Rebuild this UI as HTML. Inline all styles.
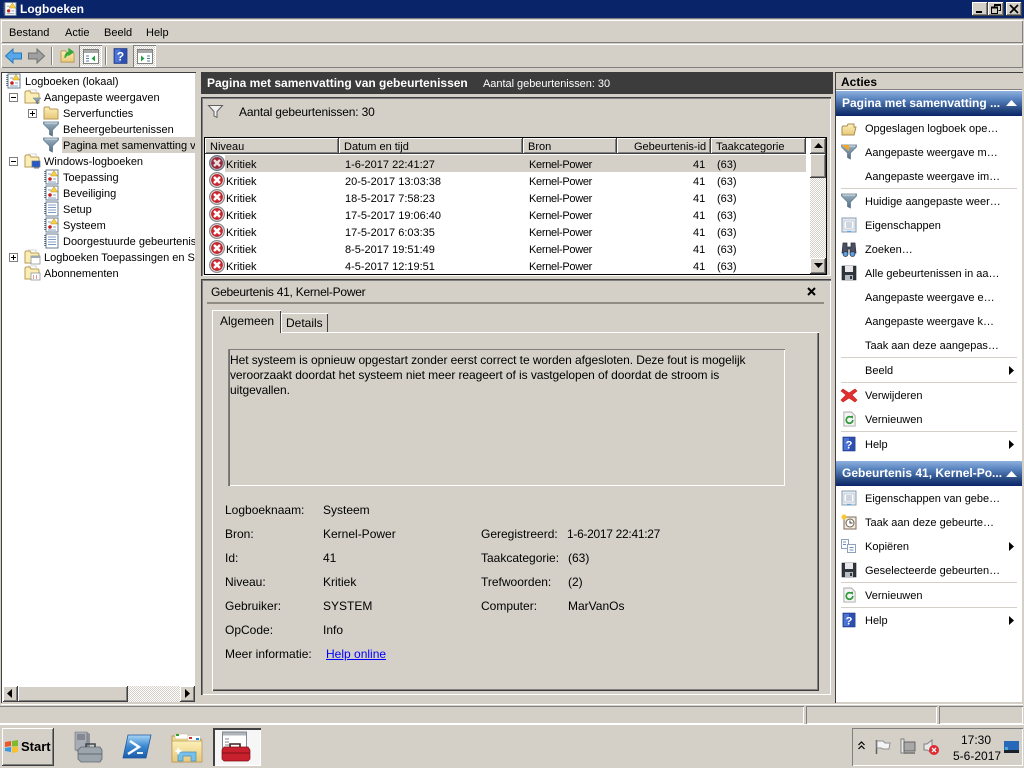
<!DOCTYPE html>
<html><head><meta charset="utf-8"><title>Logboeken</title>
<style>
html,body{margin:0;padding:0}
body{width:1024px;height:768px;position:relative;overflow:hidden;background:#d4d0c8;font:11px/16px "Liberation Sans",sans-serif;color:#000}
.a{position:absolute}
.t{position:absolute;white-space:nowrap;font:11px/16px "Liberation Sans",sans-serif;color:#000;margin-top:1px}
.d{font-size:12px;margin-top:0}
.k{letter-spacing:-.3px}
.btn{position:absolute;background:#d4d0c8;box-shadow:inset -1px -1px 0 #404040,inset 1px 1px 0 #fff,inset -2px -2px 0 #808080}
.hd{position:absolute;background:#d4d0c8;top:138px;height:16px;box-shadow:inset -1px -1px 0 #404040,inset 1px 1px 0 #fff,inset -2px -2px 0 #808080}
.dith{position:absolute;background:repeating-conic-gradient(#d4d0c8 0 25%,#fff 0 50%) 0 0/2px 2px}
.sep{position:absolute;left:841px;width:176px;height:1px;background:#d4d0c8}
.grp{position:absolute;left:836px;width:186px;height:25px;background:linear-gradient(#8eb1de,#5580bc 35%,#24467f 75%,#0a246a);color:#fff;font:bold 12px/25px "Liberation Sans",sans-serif;white-space:nowrap;text-indent:6px}
svg{position:absolute;overflow:visible}
a{color:#00f}
</style></head><body>
<svg width="0" height="0" style="position:absolute"><defs>
<linearGradient id="fg" x1="0" y1="0" x2="0" y2="1"><stop offset="0" stop-color="#9fb4c4"/><stop offset="1" stop-color="#4d6a80"/></linearGradient>
<linearGradient id="fo" x1="0" y1="0" x2="0" y2="1"><stop offset="0" stop-color="#fdf0b8"/><stop offset="1" stop-color="#e8c878"/></linearGradient>
<radialGradient id="rd"><stop offset="0" stop-color="#f05050"/><stop offset="1" stop-color="#b81420"/></radialGradient>
<symbol id="err" viewBox="0 0 16 16"><circle cx="8" cy="8" r="8" fill="#8b8b90"/><circle cx="8" cy="8" r="6.300" fill="url(#rd)" stroke="#e4e4e4" stroke-width=".9"/><path d="M5 5l6 6M11 5l-6 6" stroke="#fff" stroke-width="2.400"/></symbol>
<symbol id="errs" viewBox="0 0 16 16"><circle cx="8" cy="8" r="8" fill="#6c7488"/><circle cx="8" cy="8" r="6.300" fill="#9a2838" stroke="#bbb" stroke-width=".9"/><path d="M5 5l6 6M11 5l-6 6" stroke="#e8e0e0" stroke-width="2.400"/></symbol>
<symbol id="fil" viewBox="0 0 16 16"><path d="M.5 1h15v2L9.500 9v6l-3-1.500V9L.5 3z" fill="url(#fg)" stroke="#5e7587" stroke-width=".7"/><path d="M2 2h12" stroke="#dfe8ee"/></symbol>
<symbol id="fold" viewBox="0 0 16 16"><path d="M1 14V3l1-1h4l1 2h7l1 1v9z" fill="url(#fo)" stroke="#b89a58"/></symbol>
<symbol id="foldp" viewBox="0 0 16 16"><path d="M1 14V3l1-1h4l1 2h7l1 1v9z" fill="#fbeeb4" stroke="#b89a58"/><path d="M4 1h8v3" fill="#fff" stroke="#b0b0b0" stroke-width=".6"/></symbol>
<symbol id="log" viewBox="0 0 16 16"><rect x="2" y="1" width="12" height="14" fill="#fff" stroke="#6a7c92"/><path d="M1 2v12" stroke="#4a6078" stroke-width="1.500" stroke-dasharray="1 1"/><path d="M4 4h8M4 6.500h8M4 9h8M4 11.500h8" stroke="#7f9cc0"/></symbol>
<symbol id="logw" viewBox="0 0 16 16"><rect x="2" y="1" width="12" height="14" fill="#fff" stroke="#6a7c92"/><path d="M1 2v12" stroke="#4a6078" stroke-width="1.500" stroke-dasharray="1 1"/><path d="M4 5h3M4 13h8M9 10h3" stroke="#7f9cc0"/><path d="M10 1.500l3.500 5.500h-7z" fill="#f8d040" stroke="#b89020" stroke-width=".5"/><circle cx="6" cy="10" r="1.800" fill="#c82020"/></symbol>
<symbol id="prop" viewBox="0 0 16 16"><rect x="1" y="1" width="14" height="14" fill="#e4eaf2" stroke="#8c9cb0"/><rect x="3" y="4" width="10" height="8" fill="#fff" stroke="#a8b4c4" stroke-width=".6"/><path d="M5 6h6M5 8h6M5 10h6" stroke="#7c90b0" stroke-width=".8"/><path d="M6 14.500h4" stroke="#5aa8e0" stroke-width="1.200"/></symbol>
<symbol id="save" viewBox="0 0 16 16"><path d="M1 1h14v14H1z" fill="#30363c" stroke="#1c2024" stroke-width=".6"/><rect x="4" y="1" width="8" height="6" fill="#e8e8ec"/><rect x="4" y="10" width="8" height="5" fill="#b8bcc4"/><rect x="9" y="11" width="2" height="3" fill="#30363c"/></symbol>
<symbol id="ref" viewBox="0 0 16 16"><path d="M2 .5h8l4 4v11H2z" fill="#f4f4f4" stroke="#a8a8a8"/><path d="M11.500 9a3.500 3.500 0 1 1-1.200-2.600" fill="none" stroke="#2f9a3a" stroke-width="1.800"/><path d="M8.500 5l3.300-.6-.3 3.400z" fill="#2f9a3a"/></symbol>
<symbol id="help" viewBox="0 0 16 16"><rect x="1" y="0" width="14" height="16" fill="#2c4fb0" stroke="#1c3078" stroke-width=".6"/><rect x="2" y="1" width="6" height="14" fill="#4d74d4"/><text x="8" y="13" font-family="Liberation Sans" font-weight="bold" font-size="13" fill="#fff" text-anchor="middle">?</text></symbol>
</defs></svg>

<!-- title bar -->
<div class="a" style="left:0;top:0;width:1024px;height:18px;background:#0a246a"></div>
<div class="a" style="left:0;top:18px;width:1024px;height:1px;background:#808080"></div>
<svg style="left:3px;top:1px" width="15" height="16"><use href="#logw" width="15" height="16"/></svg>
<div class="t d" style="left:20px;top:1px;color:#fff;font-weight:bold">Logboeken</div>
<div class="btn" style="left:972px;top:2px;width:16px;height:14px"></div>
<div class="a" style="left:976px;top:11px;width:6px;height:2px;background:#000"></div>
<div class="btn" style="left:988px;top:2px;width:16px;height:14px"></div>
<svg style="left:991px;top:4px" width="10" height="10"><path d="M3.500 2.500V.5h6v6H7.500M.5 3h6v6.500H.5z" fill="none" stroke="#000"/><path d="M3 1.500h6.500M.5 4h6" stroke="#000"/></svg>
<div class="btn" style="left:1006px;top:2px;width:16px;height:14px"></div>
<svg style="left:1009px;top:4px" width="10" height="10"><path d="M1 1l8 8M9 1L1 9" stroke="#000" stroke-width="1.700"/></svg>

<!-- menu -->
<div class="a" style="left:1px;top:20px;width:1022px;height:23px;box-shadow:inset 1px 1px 0 #fff,inset -1px -1px 0 #808080"></div>
<div class="t" style="left:9px;top:24px">Bestand</div>
<div class="t" style="left:65px;top:24px">Actie</div>
<div class="t" style="left:104px;top:24px">Beeld</div>
<div class="t" style="left:146px;top:24px">Help</div>

<!-- toolbar -->
<div class="a" style="left:1px;top:44px;width:1022px;height:24px;box-shadow:inset 1px 1px 0 #fff,inset -1px -1px 0 #808080"></div>
<svg style="left:5px;top:48px" width="17" height="16"><path d="M.5 8L8 1v4h8.500v6H8v4z" fill="#58a8e8" stroke="#2878b8"/></svg>
<svg style="left:28px;top:48px" width="17" height="16"><path d="M16.500 8L9 1v4H.5v6H9v4z" fill="#a0a0a0" stroke="#707070"/></svg>
<div class="a" style="left:51px;top:47px;width:1px;height:18px;background:#808080"></div>
<div class="a" style="left:52px;top:47px;width:1px;height:18px;background:#fff"></div>
<svg style="left:60px;top:48px" width="15" height="16"><use href="#fold" y="1" width="15" height="15"/><path d="M5 10C5 5 8 4 11 4M9 1l4 3-4 3z" fill="#38a838" stroke="#38a838" stroke-width="1.300"/></svg>
<div class="dith" style="left:79px;top:45px;width:23px;height:22px;box-shadow:inset 1px 1px 0 #808080,inset -1px -1px 0 #fff"></div>
<svg style="left:83px;top:49px" width="16" height="15"><rect x=".5" y=".5" width="15" height="14" fill="#fff" stroke="#808080"/><rect x="1" y="1" width="14" height="3" fill="#a8a8a8"/><path d="M3 7h3M3 9.500h3M3 12h3" stroke="#5080a8"/><path d="M12 6.500v6L8.500 9.500z" fill="#20a040"/></svg>
<div class="a" style="left:105px;top:47px;width:1px;height:18px;background:#808080"></div>
<div class="a" style="left:106px;top:47px;width:1px;height:18px;background:#fff"></div>
<svg style="left:113px;top:48px" width="15" height="16"><use href="#help" width="15" height="16"/></svg>
<div class="dith" style="left:133px;top:45px;width:23px;height:22px;box-shadow:inset 1px 1px 0 #808080,inset -1px -1px 0 #fff"></div>
<svg style="left:137px;top:49px" width="16" height="15"><rect x=".5" y=".5" width="15" height="14" fill="#fff" stroke="#808080"/><rect x="1" y="1" width="14" height="3" fill="#a8a8a8"/><path d="M10 7h3M10 9.500h3M10 12h3" stroke="#5080a8"/><path d="M4 6.500v6L7.500 9.500z" fill="#20a040"/></svg>

<!-- left pane -->
<div class="a" style="left:1px;top:72px;width:195px;height:631px;background:#fff;box-shadow:inset 1px 1px 0 #404040,inset -1px -1px 0 #d4d0c8"></div>
<div class="a" style="left:62px;top:137px;width:133px;height:16px;background:#d4d0c8"></div>
<svg style="left:6px;top:73px" width="16" height="16"><use href="#logw" width="16" height="16"/></svg>
<div class="t" style="left:25px;top:73px">Logboeken (lokaal)</div>
<div class="a" style="left:9px;top:93px;width:7px;height:7px;border:1px solid #808080"></div><div class="a" style="left:11px;top:97px;width:5px;height:1px;background:#000"></div>
<svg style="left:24px;top:89px" width="17" height="16"><use href="#foldp" width="16" height="16"/><path d="M9 9h8l-3 3v3l-2-1v-2z" fill="url(#fg)" stroke="#5e7587" stroke-width=".5"/></svg>
<div class="t" style="left:44px;top:89px">Aangepaste weergaven</div>
<div class="a" style="left:28px;top:109px;width:7px;height:7px;border:1px solid #808080"></div><div class="a" style="left:30px;top:113px;width:5px;height:1px;background:#000"></div><div class="a" style="left:32px;top:111px;width:1px;height:5px;background:#000"></div>
<svg style="left:43px;top:105px" width="16" height="16"><use href="#fold" width="16" height="16"/></svg>
<div class="t" style="left:63px;top:105px">Serverfuncties</div>
<svg style="left:43px;top:121px" width="16" height="16"><use href="#fil" width="16" height="16"/></svg>
<div class="t" style="left:63px;top:121px">Beheergebeurtenissen</div>
<svg style="left:43px;top:137px" width="16" height="16"><use href="#fil" width="16" height="16"/></svg>
<div class="a" style="left:62px;top:137px;width:133px;height:16px;overflow:hidden"><div class="t" style="left:1px;top:0">Pagina met samenvatting van gebeurtenissen</div></div>
<div class="a" style="left:9px;top:157px;width:7px;height:7px;border:1px solid #808080"></div><div class="a" style="left:11px;top:161px;width:5px;height:1px;background:#000"></div>
<svg style="left:24px;top:153px" width="17" height="17"><use href="#foldp" width="16" height="16"/><rect x="8" y="8" width="8" height="6" fill="#2858c8" stroke="#607080" stroke-width=".7"/><path d="M10 15h5" stroke="#708090"/></svg>
<div class="t" style="left:44px;top:153px">Windows-logboeken</div>
<svg style="left:44px;top:169px" width="16" height="16"><use href="#logw" width="16" height="16"/></svg>
<div class="t" style="left:63px;top:169px">Toepassing</div>
<svg style="left:44px;top:185px" width="16" height="16"><use href="#logw" width="16" height="16"/></svg>
<div class="t" style="left:63px;top:185px">Beveiliging</div>
<svg style="left:44px;top:201px" width="16" height="16"><use href="#log" width="16" height="16"/></svg>
<div class="t" style="left:63px;top:201px">Setup</div>
<svg style="left:44px;top:217px" width="16" height="16"><use href="#logw" width="16" height="16"/></svg>
<div class="t" style="left:63px;top:217px">Systeem</div>
<svg style="left:44px;top:233px" width="16" height="16"><use href="#log" width="16" height="16"/></svg>
<div class="a" style="left:62px;top:233px;width:133px;height:16px;overflow:hidden"><div class="t" style="left:1px;top:0">Doorgestuurde gebeurtenissen</div></div>
<div class="a" style="left:9px;top:253px;width:7px;height:7px;border:1px solid #808080"></div><div class="a" style="left:11px;top:257px;width:5px;height:1px;background:#000"></div><div class="a" style="left:13px;top:255px;width:1px;height:5px;background:#000"></div>
<svg style="left:24px;top:249px" width="17" height="17"><use href="#foldp" width="16" height="16"/><rect x="7" y="7" width="9" height="8" fill="#fff" stroke="#808890" stroke-width=".7"/><rect x="7" y="7" width="9" height="2" fill="#a0a8b0"/></svg>
<div class="a" style="left:43px;top:249px;width:152px;height:16px;overflow:hidden"><div class="t" style="left:1px;top:0">Logboeken Toepassingen en Services</div></div>
<svg style="left:24px;top:265px" width="17" height="17"><use href="#foldp" width="16" height="16"/><rect x="7" y="8" width="9" height="7" fill="#fff" stroke="#808890" stroke-width=".7"/><path d="M9 11h1M12 11h1M9 13h1M12 13h1" stroke="#c03030"/></svg>
<div class="t" style="left:44px;top:265px">Abonnementen</div>
<!-- left scrollbar -->
<div class="dith" style="left:3px;top:686px;width:192px;height:16px"></div>
<div class="btn" style="left:3px;top:686px;width:15px;height:16px"></div>
<svg style="left:7px;top:689px" width="6" height="10"><path d="M5 0v9L0 4.500z" fill="#000"/></svg>
<div class="btn" style="left:18px;top:686px;width:110px;height:16px"></div>
<div class="btn" style="left:180px;top:686px;width:15px;height:16px"></div>
<svg style="left:185px;top:689px" width="6" height="10"><path d="M0 0v9l5-4.500z" fill="#000"/></svg>

<!-- middle -->
<div class="a" style="left:201px;top:72px;width:632px;height:22px;background:#3c3c3c"></div>
<div class="t d" style="left:207px;top:75px;color:#fff;font-weight:bold">Pagina met samenvatting van gebeurtenissen</div>
<div class="t" style="left:483px;top:75px;color:#fff;letter-spacing:-.03px">Aantal gebeurtenissen: 30</div>
<div class="a" style="left:201px;top:97px;width:630px;height:179px;box-shadow:inset 1px 1px 0 #404040,inset 2px 2px 0 #808080,inset -1px -1px 0 #fff"></div>
<svg style="left:208px;top:105px" width="16" height="14"><path d="M.5.500h14l-5.500 6v6l-3-1.500V6.500z" fill="#f0f0f0" stroke="#606060"/></svg>
<div class="t d" style="left:239px;top:104px;letter-spacing:-.15px">Aantal gebeurtenissen: 30</div>
<!-- grid -->
<div class="a" style="left:204px;top:137px;width:623px;height:138px;background:#fff;box-shadow:inset 0 0 0 1px #000"></div>
<div class="hd" style="left:205px;width:134px"></div>
<div class="hd" style="left:339px;width:184px"></div>
<div class="hd" style="left:523px;width:94px"></div>
<div class="hd" style="left:617px;width:94px"></div>
<div class="hd" style="left:711px;width:95px"></div>
<div class="t" style="left:210px;top:138px">Niveau</div>
<div class="t" style="left:344px;top:138px">Datum en tijd</div>
<div class="t" style="left:528px;top:138px">Bron</div>
<div class="t" style="left:634px;top:138px">Gebeurtenis-id</div>
<div class="t" style="left:716px;top:138px">Taakcategorie</div>
<div class="a" style="left:225px;top:155px;width:581px;height:17px;background:#d4d0c8"></div>

<svg style="left:209px;top:155px" width="16" height="16"><use href="#errs" width="16" height="16"/></svg>
<svg style="left:209px;top:172px" width="16" height="16"><use href="#err" width="16" height="16"/></svg>
<svg style="left:209px;top:189px" width="16" height="16"><use href="#err" width="16" height="16"/></svg>
<svg style="left:209px;top:206px" width="16" height="16"><use href="#err" width="16" height="16"/></svg>
<svg style="left:209px;top:223px" width="16" height="16"><use href="#err" width="16" height="16"/></svg>
<svg style="left:209px;top:240px" width="16" height="16"><use href="#err" width="16" height="16"/></svg>
<svg style="left:209px;top:257px" width="16" height="16"><use href="#err" width="16" height="16"/></svg>

<div class="t" style="left:226px;top:156px">Kritiek</div><div class="t" style="left:345px;top:156px">1-6-2017 22:41:27</div><div class="t k" style="left:529px;top:156px">Kernel-Power</div><div class="t" style="left:693px;top:156px">41</div><div class="t" style="left:717px;top:156px">(63)</div>
<div class="t" style="left:226px;top:173px">Kritiek</div><div class="t" style="left:345px;top:173px">20-5-2017 13:03:38</div><div class="t k" style="left:529px;top:173px">Kernel-Power</div><div class="t" style="left:693px;top:173px">41</div><div class="t" style="left:717px;top:173px">(63)</div>
<div class="t" style="left:226px;top:190px">Kritiek</div><div class="t" style="left:345px;top:190px">18-5-2017 7:58:23</div><div class="t k" style="left:529px;top:190px">Kernel-Power</div><div class="t" style="left:693px;top:190px">41</div><div class="t" style="left:717px;top:190px">(63)</div>
<div class="t" style="left:226px;top:207px">Kritiek</div><div class="t" style="left:345px;top:207px">17-5-2017 19:06:40</div><div class="t k" style="left:529px;top:207px">Kernel-Power</div><div class="t" style="left:693px;top:207px">41</div><div class="t" style="left:717px;top:207px">(63)</div>
<div class="t" style="left:226px;top:224px">Kritiek</div><div class="t" style="left:345px;top:224px">17-5-2017 6:03:35</div><div class="t k" style="left:529px;top:224px">Kernel-Power</div><div class="t" style="left:693px;top:224px">41</div><div class="t" style="left:717px;top:224px">(63)</div>
<div class="t" style="left:226px;top:241px">Kritiek</div><div class="t" style="left:345px;top:241px">8-5-2017 19:51:49</div><div class="t k" style="left:529px;top:241px">Kernel-Power</div><div class="t" style="left:693px;top:241px">41</div><div class="t" style="left:717px;top:241px">(63)</div>
<div class="t" style="left:226px;top:258px">Kritiek</div><div class="t" style="left:345px;top:258px">4-5-2017 12:19:51</div><div class="t k" style="left:529px;top:258px">Kernel-Power</div><div class="t" style="left:693px;top:258px">41</div><div class="t" style="left:717px;top:258px">(63)</div>

<!-- grid scrollbar -->
<div class="dith" style="left:810px;top:138px;width:16px;height:136px"></div>
<div class="btn" style="left:810px;top:138px;width:16px;height:16px"></div>
<svg style="left:814px;top:143px" width="9" height="5"><path d="M0 5h9L4.500 0z" fill="#000"/></svg>
<div class="btn" style="left:810px;top:154px;width:16px;height:24px"></div>
<div class="btn" style="left:810px;top:258px;width:16px;height:16px"></div>
<svg style="left:814px;top:263px" width="9" height="5"><path d="M0 0h9L4.500 5z" fill="#000"/></svg>

<!-- detail -->
<div class="a" style="left:201px;top:279px;width:630px;height:416px;box-shadow:inset 1px 1px 0 #404040,inset 2px 2px 0 #808080,inset -1px -1px 0 #fff"></div>
<div class="t d" style="left:211px;top:284px;letter-spacing:-.25px">Gebeurtenis 41, Kernel-Power</div>
<div class="a" style="left:207px;top:302px;width:617px;height:2px;background:#908c84"></div>
<svg style="left:807px;top:287px" width="9" height="9"><path d="M1 1l7 7M8 1L1 8" stroke="#000" stroke-width="2"/></svg>
<!-- tabs -->
<div class="a" style="left:212px;top:332px;width:607px;height:359px;box-shadow:inset 1px 1px 0 #fff,inset -1px -1px 0 #404040,inset -2px -2px 0 #808080"></div>
<div class="a" style="left:281px;top:313px;width:47px;height:19px;box-shadow:inset 1px 1px 0 #fff,inset -1px 0 0 #404040"></div>
<div class="t d" style="left:286px;top:315px">Details</div>
<div class="a" style="left:212px;top:310px;width:69px;height:23px;background:#d4d0c8;box-shadow:inset 1px 1px 0 #fff,inset -1px 0 0 #404040"></div>
<div class="t d" style="left:220px;top:313px">Algemeen</div>
<!-- textbox -->
<div class="a" style="left:228px;top:349px;width:557px;height:137px;box-shadow:inset 1px 1px 0 #808080,inset 2px 0 0 #707070,inset -1px -1px 0 #fff"></div>
<div class="t d" style="left:230px;top:352px;letter-spacing:-.07px">Het systeem is opnieuw opgestart zonder eerst correct te worden afgesloten. Deze fout is mogelijk</div>
<div class="t d" style="left:230px;top:367px;letter-spacing:-.07px">veroorzaakt doordat het systeem niet meer reageert of is vastgelopen of doordat de stroom is</div>
<div class="t d" style="left:230px;top:382px;letter-spacing:-.07px">uitgevallen.</div>

<div class="t d" style="left:225px;top:502px">Logboeknaam:</div><div class="t d" style="left:323px;top:502px">Systeem</div>
<div class="t d" style="left:225px;top:526px">Bron:</div><div class="t d" style="left:323px;top:526px">Kernel-Power</div>
<div class="t d" style="left:481px;top:526px">Geregistreerd:</div><div class="t d" style="left:567px;top:526px;letter-spacing:-.3px">1-6-2017 22:41:27</div>
<div class="t d" style="left:225px;top:550px">Id:</div><div class="t d" style="left:323px;top:550px">41</div>
<div class="t d" style="left:481px;top:550px">Taakcategorie:</div><div class="t d" style="left:568px;top:550px">(63)</div>
<div class="t d" style="left:225px;top:574px">Niveau:</div><div class="t d" style="left:323px;top:574px">Kritiek</div>
<div class="t d" style="left:481px;top:574px">Trefwoorden:</div><div class="t d" style="left:568px;top:574px">(2)</div>
<div class="t d" style="left:225px;top:598px">Gebruiker:</div><div class="t d" style="left:323px;top:598px">SYSTEM</div>
<div class="t d" style="left:481px;top:598px">Computer:</div><div class="t d" style="left:568px;top:598px">MarVanOs</div>
<div class="t d" style="left:225px;top:622px">OpCode:</div><div class="t d" style="left:323px;top:622px">Info</div>
<div class="t d" style="left:225px;top:646px">Meer informatie:</div><div class="t d" style="left:326px;top:646px;color:#00f;text-decoration:underline">Help online</div>

<!-- right pane -->
<div class="a" style="left:835px;top:72px;width:188px;height:631px;background:#fff;box-shadow:inset 1px 1px 0 #404040,inset -1px -1px 0 #d4d0c8"></div>
<div class="a" style="left:836px;top:73px;width:186px;height:16px;background:#d4d0c8;border-bottom:1px solid #808080"></div>
<div class="t d" style="left:841px;top:74px;font-weight:bold">Acties</div>
<div class="grp" style="top:91px">Pagina met samenvatting ...</div>
<svg style="left:1006px;top:100px" width="11" height="6"><path d="M0 6h11L5.500 0z" fill="#fff"/></svg>

<svg style="left:841px;top:121px" width="16" height="16"><path d="M1 14V6l1-1h4l1-2h6v3h2l-2 8z" fill="url(#fo)" stroke="#a88c50"/></svg>
<div class="t" style="left:865px;top:120px">Opgeslagen logboek ope…</div>
<svg style="left:841px;top:144px" width="16" height="16"><use href="#fil" width="16" height="16"/><path d="M1 1h7v6z" fill="#f8a820"/></svg>
<div class="t" style="left:865px;top:144px">Aangepaste weergave m…</div>
<div class="t" style="left:865px;top:168px">Aangepaste weergave im…</div>
<div class="sep" style="top:188px"></div>
<svg style="left:841px;top:193px" width="16" height="16"><use href="#fil" width="16" height="16"/></svg>
<div class="t" style="left:865px;top:193px">Huidige aangepaste weer…</div>
<svg style="left:841px;top:217px" width="16" height="16"><use href="#prop" width="16" height="16"/></svg>
<div class="t" style="left:865px;top:217px">Eigenschappen</div>
<svg style="left:841px;top:241px" width="16" height="16"><path d="M2 2h4v4h4V2h4l1 10H9V8H7v4H1z" fill="#4a5060" stroke="#2c3040" stroke-width=".7"/><circle cx="4.500" cy="13" r="2.500" fill="#5aa0e0" stroke="#2c3040" stroke-width=".7"/><circle cx="11.500" cy="13" r="2.500" fill="#5aa0e0" stroke="#2c3040" stroke-width=".7"/></svg>
<div class="t" style="left:865px;top:241px">Zoeken…</div>
<svg style="left:841px;top:265px" width="16" height="16"><use href="#save" width="16" height="16"/></svg>
<div class="t" style="left:865px;top:265px">Alle gebeurtenissen in aa…</div>
<div class="t" style="left:865px;top:289px">Aangepaste weergave e…</div>
<div class="t" style="left:865px;top:313px">Aangepaste weergave k…</div>
<div class="t" style="left:865px;top:337px">Taak aan deze aangepas…</div>
<div class="sep" style="top:357px"></div>
<div class="t" style="left:865px;top:362px">Beeld</div>
<svg style="left:1009px;top:366px" width="5" height="9"><path d="M0 0v9l5-4.500z" fill="#000"/></svg>
<div class="sep" style="top:382px"></div>
<svg style="left:841px;top:387px" width="16" height="16"><path d="M2 2l6 4 6-4 2 2-5 4 5 5-2 2-6-4-6 4-2-2 5-5-5-4z" fill="#e03030" stroke="#c02020" stroke-width=".6"/></svg>
<div class="t" style="left:865px;top:387px">Verwijderen</div>
<svg style="left:842px;top:411px" width="15" height="16"><use href="#ref" width="15" height="16"/></svg>
<div class="t" style="left:865px;top:411px">Vernieuwen</div>
<div class="sep" style="top:431px"></div>
<svg style="left:842px;top:436px" width="14" height="16"><use href="#help" width="14" height="16"/></svg>
<div class="t" style="left:865px;top:436px">Help</div>
<svg style="left:1009px;top:440px" width="5" height="9"><path d="M0 0v9l5-4.500z" fill="#000"/></svg>

<div class="grp" style="top:461px">Gebeurtenis 41, Kernel-Po...</div>
<svg style="left:1006px;top:471px" width="11" height="6"><path d="M0 6h11L5.500 0z" fill="#fff"/></svg>
<svg style="left:841px;top:490px" width="16" height="16"><use href="#prop" width="16" height="16"/></svg>
<div class="t" style="left:865px;top:490px">Eigenschappen van gebe…</div>
<svg style="left:841px;top:514px" width="16" height="16"><rect x="3" y="3" width="12" height="12" fill="#f0ece0" stroke="#806858"/><circle cx="9" cy="9" r="4" fill="#fff" stroke="#706050"/><path d="M9 6.500V9h2.500" stroke="#404040" fill="none"/><circle cx="3" cy="3" r="2.500" fill="#f8c830"/></svg>
<div class="t" style="left:865px;top:514px">Taak aan deze gebeurte…</div>
<svg style="left:841px;top:538px" width="16" height="16"><path d="M.5 1.500h7v9h-7z" fill="#fff" stroke="#90a0b8"/><path d="M6.500 6.500h8v8h-8z" fill="#fff" stroke="#90a0b8"/><path d="M2 4h3M2 6.500h3M8.500 9.500h4M8.500 12h4" stroke="#6890c8"/></svg>
<div class="t" style="left:865px;top:538px">Kopiëren</div>
<svg style="left:1009px;top:542px" width="5" height="9"><path d="M0 0v9l5-4.500z" fill="#000"/></svg>
<svg style="left:841px;top:562px" width="16" height="16"><use href="#save" width="16" height="16"/></svg>
<div class="t" style="left:865px;top:562px">Geselecteerde gebeurten…</div>
<div class="sep" style="top:582px"></div>
<svg style="left:842px;top:587px" width="15" height="16"><use href="#ref" width="15" height="16"/></svg>
<div class="t" style="left:865px;top:587px">Vernieuwen</div>
<div class="sep" style="top:607px"></div>
<svg style="left:842px;top:612px" width="14" height="16"><use href="#help" width="14" height="16"/></svg>
<div class="t" style="left:865px;top:612px">Help</div>
<svg style="left:1009px;top:616px" width="5" height="9"><path d="M0 0v9l5-4.500z" fill="#000"/></svg>

<!-- status bar -->
<div class="a" style="left:1px;top:704px;width:1022px;height:1px;background:#fff"></div>
<div class="a" style="left:0;top:706px;width:804px;height:18px;box-shadow:inset 0 1px 0 #808080,inset -1px -1px 0 #fff"></div>
<div class="a" style="left:806px;top:706px;width:131px;height:18px;box-shadow:inset 1px 1px 0 #808080,inset -1px -1px 0 #fff"></div>
<div class="a" style="left:939px;top:706px;width:84px;height:18px;box-shadow:inset 1px 1px 0 #808080,inset -1px -1px 0 #fff"></div>

<!-- taskbar -->
<div class="a" style="left:0;top:724px;width:1024px;height:1px;background:#fff"></div>
<div class="a" style="left:0;top:725px;width:1024px;height:1px;background:#d4d0c8"></div>
<div class="btn" style="left:2px;top:728px;width:52px;height:38px"></div>
<svg style="left:4px;top:739px" width="16" height="15"><path d="M1 3l6-1v5l-6 1z" fill="#e85828"/><path d="M8 2l6-1v6l-6 .5z" fill="#80b830"/><path d="M1 9l6-1v5l-6-1z" fill="#3898e0"/><path d="M8 8l6-.5V13l-6 1z" fill="#f8c030"/></svg>
<div class="t" style="left:21px;top:738px;font-weight:bold;font-size:13px">Start</div>
<!-- server manager -->
<svg style="left:73px;top:730px" width="30" height="34"><path d="M2 2h12l3 2v18H5l-3-2z" fill="#8c9098"/><path d="M2 2h12v18H2z" fill="#a8acb4" stroke="#70747c" stroke-width=".6"/><path d="M4 5h8M4 7h8M4 9h8" stroke="#60646c"/><path d="M8 17h19l2 3v9l-2 3H8l-3-3v-9z" fill="#9ca4ac" stroke="#606870" stroke-width=".8"/><path d="M13 17v-3h9v3" fill="none" stroke="#404850" stroke-width="1.600"/><path d="M5 24h24" stroke="#606870"/></svg>
<!-- powershell -->
<svg style="left:122px;top:733px" width="30" height="28"><defs><linearGradient id="ps" x1="0" y1="0" x2="0" y2="1"><stop offset="0" stop-color="#a8d4f4"/><stop offset=".5" stop-color="#3a88d0"/><stop offset="1" stop-color="#1c5aa8"/></linearGradient></defs><path d="M6 2h23l-5 23H1z" fill="url(#ps)" stroke="#1c5aa0" stroke-width=".8"/><path d="M8 8l9 6-11 7" fill="none" stroke="#fff" stroke-width="2.400"/><path d="M15 20h6" stroke="#fff" stroke-width="1.800"/></svg>
<!-- explorer -->
<svg style="left:171px;top:732px" width="32" height="31"><path d="M1 4h13l2 3h14v23H1z" fill="#f4dc88" stroke="#b89a58"/><path d="M4 2h13v5H4z" fill="#fff" stroke="#c0b088" stroke-width=".6"/><path d="M5 2h3v2H5z" fill="#30a030"/><path d="M17 4h12v5H17z" fill="#fff"/><path d="M18 5h3v2h-3z" fill="#d03030"/><path d="M25 6h3v2h-3z" fill="#2080d0"/><path d="M1 9h30v21H1z" fill="url(#fo)" stroke="#b89a58" stroke-width=".8"/><path d="M7 29v-9h18v9h-5v-5h-8v5z" fill="#78c0e8" stroke="#4890c0" stroke-width=".7"/><path d="M7 15l2 3 3 1-3 1-2 3-1-3-3-1 3-1z" fill="#fff"/></svg>
<!-- active -->
<div class="dith" style="left:213px;top:728px;width:48px;height:38px;box-shadow:inset 2px 2px 0 #404040,inset -1px -1px 0 #fff"></div>
<div class="a" style="left:215px;top:730px;width:45px;height:35px;background:#f6f6f6"></div>
<svg style="left:221px;top:731px" width="32" height="32"><rect x="1.500" y="1" width="24" height="20" fill="#fff" stroke="#808890"/><rect x="2" y="1.500" width="23" height="3" fill="#b0b4bc"/><path d="M4 8h4M4 11h4M4 14h4" stroke="#808890"/><path d="M9 16v-3h10v3" fill="none" stroke="#402020" stroke-width="1.600"/><path d="M3 16h24l2 3v9l-2 2H3l-2-2v-9z" fill="#c8202c" stroke="#801018" stroke-width=".7"/><path d="M1 22h28" stroke="#801018"/></svg>
<!-- tray -->
<div class="a" style="left:852px;top:728px;width:171px;height:38px;box-shadow:inset 1px 1px 0 #808080,inset -1px -1px 0 #fff"></div>
<svg style="left:858px;top:741px" width="7" height="9"><path d="M.5 4L3.500 1l3 3M.5 8l3-3 3 3" fill="none" stroke="#000" stroke-width="1.200"/></svg>
<svg style="left:875px;top:739px" width="17" height="16"><path d="M1.500 1v14" stroke="#606060" stroke-width="1.500"/><path d="M2 2h6l2 2h5l-1 6H8L6 9H2z" fill="#f4f4f4" stroke="#909090"/></svg>
<svg style="left:899px;top:738px" width="17" height="17"><path d="M2 1v14h3V1z" fill="#e8e8e8" stroke="#606060" stroke-width=".7"/><rect x="5" y="4" width="11" height="9" fill="#a8a8a8" stroke="#505050" stroke-width=".8"/><path d="M5 15h11" stroke="#606060" stroke-width="1.300"/></svg>
<svg style="left:923px;top:739px" width="17" height="17"><path d="M1 5h3l5-4v13l-5-3H1z" fill="#e8e8e8" stroke="#808080"/><circle cx="11" cy="11" r="5" fill="#e02830"/><path d="M9 9l4 4M13 9l-4 4" stroke="#fff" stroke-width="1.300"/></svg>
<div class="t d" style="left:961px;top:732px">17:30</div>
<div class="t d" style="left:953px;top:748px">5-6-2017</div>
<svg style="left:1004px;top:741px" width="15" height="13"><rect width="15" height="12" fill="#2868b8"/><rect y="9" width="15" height="3" fill="#182028"/><rect x="1" y="6" width="3" height="3" fill="#50a8d8"/></svg>
</body></html>
